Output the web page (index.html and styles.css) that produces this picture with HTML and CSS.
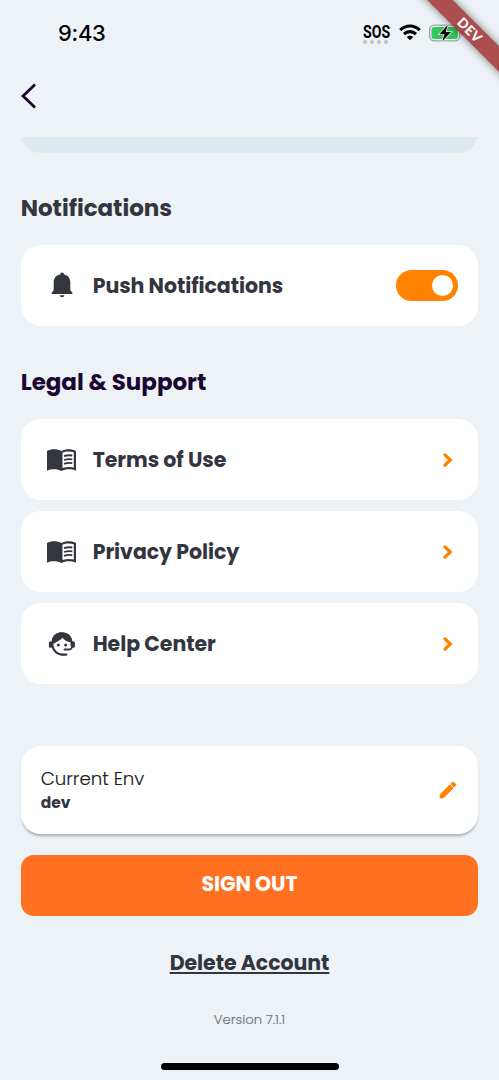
FILE: index.html
```html
<!DOCTYPE html>
<html lang="en">
<head>
<meta charset="utf-8">
<title>Settings</title>
<link rel="stylesheet" href="styles.css">
</head>
<body>
<svg class="defs" width="0" height="0" aria-hidden="true">
  <symbol id="book" viewBox="0 0 29 22">
    <path fill="currentColor" fill-rule="evenodd" d="M0 2C3.800-.2 10.600-.3 14.500 2 18.400-.3 25.200-.2 29 2V21.700C24.500 19.700 18.500 19.800 14.500 22 10.500 19.800 4.500 19.700 0 21.700ZM15.500 3.600V19.100C19 17.700 23.500 17.500 26.800 18.500V3.300C23.400 2.100 18.600 2.200 15.500 3.600Z"/>
    <path fill="none" stroke="currentColor" stroke-width="1.800" d="M17 7.200Q21 5.800 25.300 6.500M17 11Q21 9.600 25.300 10.300M17 14.800Q21 13.400 25.300 14.100"/>
  </symbol>
  <symbol id="chevron" viewBox="0 0 10 14">
    <path d="M2 1.900 7.200 7 2 12.100" fill="none" stroke="currentColor" stroke-width="3.300" stroke-linecap="round" stroke-linejoin="miter"/>
  </symbol>
</svg>
<main class="screen">
  <header class="status">
    <span class="time">9:43</span>
    <div class="indicators">
      <div class="carrier"><span class="sos">SOS</span><span class="dots"><i></i><i></i><i></i><i></i></span></div>
      <svg class="wifi" viewBox="0 0 22 17">
        <g fill="none" stroke="#000" stroke-width="3.100"><path d="M1.300 6.200C6.800.6 15.200.6 20.700 6.200"/><path d="M5 10.100C8.400 6.800 13.600 6.800 17 10.100"/></g>
        <path d="M7.800 12.900C9.600 11.300 12.400 11.300 14.200 12.900L11 16.300Z"/>
      </svg>
      <svg class="battery" viewBox="0 0 36 20">
        <rect x=".7" y="2.200" width="30" height="15.600" rx="4.500" fill="none" stroke="#9da2a5" stroke-width="1.300"/>
        <rect x="2.500" y="4" width="26.400" height="12" rx="2.700" fill="#35c759"/>
        <path d="M32.500 7.500Q34.500 8 34.500 10T32.500 12.500Z" fill="#777b7e"/>
        <path d="M18.800 1.700 10.300 11.200H15.500L13.200 18.500 21.900 8.900H16.700Z" fill="#000" stroke="#edf2f6" stroke-width="1.500" paint-order="stroke"/>
      </svg>
    </div>
    <div class="ribbon">DEV</div>
  </header>
  <nav class="nav">
    <svg class="back" viewBox="0 0 16 26"><path d="M14 1.500 2 13 14 24.500" fill="none" stroke="currentColor" stroke-width="2.800"/></svg>
  </nav>
  <div class="clipped"></div>
  <h2 class="heading notifications">Notifications</h2>
  <section class="card">
    <svg class="icon" viewBox="0 0 30 30"><path fill="currentColor" d="M15 2.500Q17 2.500 17 4.600C21.300 5.500 23.300 8.600 23.300 12.500V19.500Q23.300 21.200 25.300 22.600V24H4.700V22.600Q6.700 21.200 6.700 19.500V12.500C6.700 8.600 8.700 5.500 13 4.600Q13 2.500 15 2.500ZM12.500 25.200H17.500Q17 27.200 15 27.200T12.500 25.200Z"/></svg>
    <span class="label">Push Notifications</span>
    <span class="toggle"><i></i></span>
  </section>
  <h2 class="heading legal">Legal &amp; Support</h2>
  <div class="list">
    <section class="card"><svg class="icon book"><use href="#book"/></svg><span class="label">Terms of Use</span><svg class="chevron"><use href="#chevron"/></svg></section>
    <section class="card"><svg class="icon book"><use href="#book"/></svg><span class="label">Privacy Policy</span><svg class="chevron"><use href="#chevron"/></svg></section>
    <section class="card">
      <svg class="icon" viewBox="0 0 30 30">
        <path d="M24.500 17C25.500 9 21 4.300 15 4.300S4.500 9 5.500 17C6.500 22.500 11 25.700 15.500 25.600" fill="none" stroke="currentColor" stroke-width="2.100"/>
        <path d="M5 13C5 6 9 3.500 15 3.500S25 7 25 13.500C20.500 13 17.500 11.500 15.500 8.800 13.500 11.500 9.500 13 6.500 14.800Z" fill="currentColor"/>
        <rect x="1.900" y="12.300" width="3.400" height="6.500" rx="1.600" fill="currentColor"/><rect x="24.500" y="12.300" width="3.400" height="6.500" rx="1.600" fill="currentColor"/>
        <path d="M25.500 16Q25 20.500 22 20.500H17.500" fill="none" stroke="currentColor" stroke-width="2" stroke-linecap="round"/>
        <path d="M14.800 25.600H19.300" stroke="currentColor" stroke-width="2.300" stroke-linecap="round"/>
        <circle cx="11.300" cy="16.100" r="1.500" fill="currentColor"/><circle cx="18.700" cy="16.100" r="1.500" fill="currentColor"/>
      </svg>
      <span class="label">Help Center</span><svg class="chevron"><use href="#chevron"/></svg>
    </section>
  </div>
  <section class="card env">
    <div class="env-text"><span class="env-title">Current Env</span><span class="env-name">dev</span></div>
    <svg class="pencil" viewBox="3 3 18 18"><path fill="currentColor" d="M3 17.250V20Q3 21 4 21H6.750L17.810 9.940l-3.750-3.750L3 17.250zM20.710 7.040c.39-.39.39-1.020 0-1.410l-2.340-2.340c-.39-.39-1.020-.39-1.410 0l-1.830 1.830 3.750 3.750 1.830-1.830z" stroke="currentColor" stroke-width=".9"/></svg>
  </section>
  <button class="signout"><span>SIGN OUT</span></button>
  <a class="delete">Delete Account</a>
  <p class="version">Version 7.1.1</p>
  <div class="home"></div>
</main>
</body>
</html>
```
FILE: styles.css
```css
* { box-sizing: border-box; }
body { margin: 0; background: #ecf2f6; color: #33353f; font-family: Poppins, Inter, sans-serif; }
.defs { display: block; }
.screen { display: flex; flex-direction: column; width: 499px; height: 1080px; padding: 0 20.7px; overflow: hidden; position: relative; }
.status { height: 68px; flex: none; display: flex; justify-content: space-between; padding: 0 1.200px 0 37.300px; }
.time { margin-top: 19px; font: 500 22px/29px Inter, sans-serif; color: #000; letter-spacing: -.3px; }
.indicators { display: flex; gap: 8px; padding-top: 22.500px; width: 114px; }
.carrier { width: 28px; flex: none; }
.sos { display: block; width: 38px; font: 700 17.500px/18px Roboto, sans-serif; color: #000; transform: scaleX(.81); transform-origin: left; }
.dots { display: flex; gap: 2.700px; margin-top: -1px; }
.dots i { width: 4.300px; height: 4px; border-radius: 1.500px; background: #c1c5c8; }
.wifi { width: 22px; height: 17px; flex: none; margin-top: 1.500px; }
.battery { width: 36px; height: 20px; flex: none; margin-top: .5px; }
.ribbon { position: absolute; top: 21.300px; left: 399.500px; width: 140px; height: 17.700px; transform: rotate(45deg); background: rgba(158,44,44,.84); box-shadow: 0 0 9px rgba(0,0,0,.5); color: #fff; font: 900 13.500px/19.500px Lato, sans-serif; letter-spacing: .4px; text-align: center; }
.nav { height: 69px; flex: none; padding-top: 15px; }
.back { width: 16px; height: 26px; color: #1b0731; display: block; }
.clipped { height: 15.500px; flex: none; overflow: hidden; position: relative; }
.clipped::before { content: ""; display: block; height: 60px; margin-top: -44.500px; border-radius: 20px; background: #dde9f1; }
.heading { margin: 0; flex: none; font-size: 23px; line-height: 34px; font-weight: 700; letter-spacing: -.03px; white-space: nowrap; }
.notifications { margin-top: 38.500px; }
.legal { margin-top: 39px; color: #1b0731; }
.card { flex: none; height: 81.600px; border-radius: 20px; background: #fff; display: flex; align-items: center; padding: 0 20.500px 0 26.200px; }
.notifications + .card { margin-top: 19.500px; }
.icon { width: 30px; height: 30px; flex: none; }
.icon.book { width: 29px; height: 22px; margin: 1.500px .5px 0; }
.label { margin: 1px 0 0 15.800px; font-size: 20.500px; font-weight: 700; letter-spacing: -.06px; line-height: 30px; white-space: nowrap; }
.toggle { margin-left: auto; width: 61.500px; height: 31px; border-radius: 16px; background: #ff8200; display: flex; justify-content: flex-end; align-items: center; padding-right: 5px; }
.toggle i { width: 21px; height: 21px; border-radius: 50%; background: #fff; }
.list { display: grid; gap: 10.400px; margin-top: 19.700px; }
.chevron { width: 10px; height: 14px; margin-left: auto; margin-right: 5px; color: #ff8200; }
.env { height: 88px; margin-top: 61.500px; padding: 1px 22px 0 20px; box-shadow: 0 3px 3px -1px rgba(0,0,0,.3); }
.env-text { display: flex; flex-direction: column; margin-top: 1px; }
.env-title { font-size: 18.200px; line-height: 24px; font-weight: 300; color: #1c1c1e; -webkit-text-stroke: .15px #1c1c1e; }
.env-name { font-size: 15.500px; line-height: 23px; font-weight: 700; }
.pencil { width: 16px; height: 16px; margin-left: auto; margin-bottom: 1px; color: #ff8200; overflow: visible; }
.signout { flex: none; height: 61.200px; margin-top: 21px; border: 0; padding: 0 0 3px; border-radius: 13px; background: #ff7121; color: #fff; font: 700 20.500px/30px Poppins, Inter, sans-serif; letter-spacing: -.1px; }
.delete { margin: 32px auto 0; font-size: 20.500px; line-height: 30px; font-weight: 700; text-decoration: underline; text-decoration-thickness: 1.500px; text-underline-offset: 2px; letter-spacing: -.05px; }
.version { margin: 31.500px 0 0; text-align: center; font-size: 13.200px; line-height: 20px; color: #6f7275; font-weight: 300; -webkit-text-stroke: .15px #6f7275; }
.home { width: 178px; height: 6.500px; border-radius: 4px; background: #000; margin: 33.500px auto 0; }
```
